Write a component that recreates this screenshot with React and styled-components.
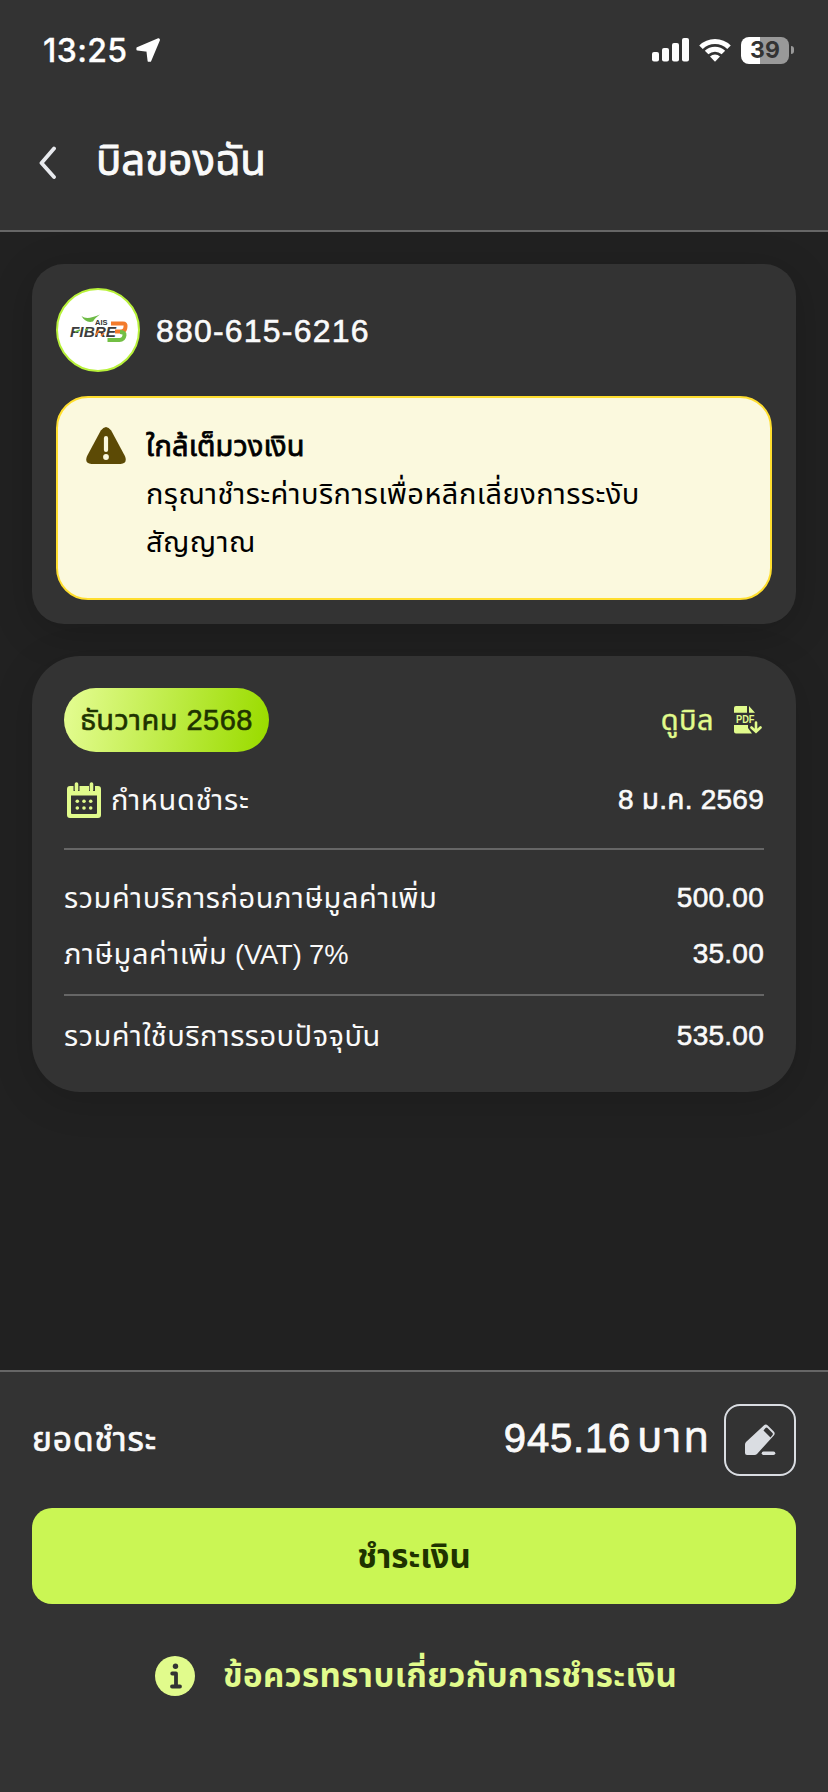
import React from "react";
import styled, { createGlobalStyle } from "styled-components";

const GlobalStyle = createGlobalStyle`
  * {
    box-sizing: border-box;
  }
  body {
    margin: 0;
    background: #212121;
    font-family: "Liberation Sans", "Noto Sans Thai", "Noto Sans", sans-serif;
    color: #fafafa;
  }
`;

const charges = [
  { label: "รวมค่าบริการก่อนภาษีมูลค่าเพิ่ม", amount: "500.00" },
  { label: "ภาษีมูลค่าเพิ่ม", note: " (VAT) 7%", amount: "35.00" },
];

const LocationIcon = () => (
  <svg width="26" height="26" viewBox="0 0 26 26">
    <path
      d="M23.5 2.2 2.4 11.2v1.4l10 1.2 1.2 10h1.6L24 2.8z"
      fill="#fff"
      stroke="#fff"
      strokeWidth="2"
      strokeLinejoin="round"
    />
  </svg>
);

const SignalIcon = () => (
  <svg width="37" height="24" viewBox="0 0 37 24">
    <rect x="0" y="14" width="7" height="9.5" rx="2" fill="#fff" />
    <rect x="10" y="10" width="7" height="13.5" rx="2" fill="#fff" />
    <rect x="20" y="5" width="7" height="18.5" rx="2" fill="#fff" />
    <rect x="30" y="0" width="7" height="23.5" rx="2" fill="#fff" />
  </svg>
);

const WifiIcon = () => (
  <svg width="32" height="24" viewBox="0 0 32 24">
    <g fill="none" stroke="#fff" strokeWidth="5">
      <path d="M2 9.2a19.8 19.8 0 0 1 28 0" />
      <path d="M7.6 14.6a11.9 11.9 0 0 1 16.8 0" />
    </g>
    <path d="M16 23.8l-5-5.2a7.2 7.2 0 0 1 10 0z" fill="#fff" />
  </svg>
);

const BackIcon = () => (
  <svg width="18" height="34" viewBox="0 0 18 34">
    <path
      d="M15 2.5 2.5 17 15 31"
      fill="none"
      stroke="#e8eaee"
      strokeWidth="3.8"
      strokeLinecap="round"
      strokeLinejoin="round"
    />
  </svg>
);

const FibreLogo = () => (
  <svg width="80" height="80" viewBox="0 0 80 80">
    <path d="M23.500 26c4 3 9 2.500 18.500-1.500-4 3-5 4-7 7-5 1.500-9-1-11.500-5.500z" fill="#6dbb45" />
    <text
      x="37"
      y="35.400"
      fontFamily="Liberation Sans"
      fontWeight="700"
      fontSize="7.500"
      fill="#333"
      textLength="12.500"
      lengthAdjust="spacingAndGlyphs"
    >
      AIS
    </text>
    <text
      x="12"
      y="47.200"
      fontFamily="Liberation Sans"
      fontWeight="700"
      fontStyle="italic"
      fontSize="14.500"
      fill="#3c3c3c"
      textLength="46"
      lengthAdjust="spacingAndGlyphs"
    >
      FIBRE
    </text>
    <path d="M53 33.500h12q3 0 2.500 3l-.3 2q-.7 3-4 3H57" fill="none" stroke="#f37b2c" strokeWidth="4" />
    <path d="M62 42q5 0 4.500 3.300-.7 4.700-5 4.700H49.500" fill="none" stroke="#72bf44" strokeWidth="4" />
    <path d="M17 42l5-2M27 40l3-1" stroke="#6dbb45" strokeWidth="1.500" />
    <path d="M38 45l3-5M43 46l3-3" stroke="#f37b2c" strokeWidth="1.500" />
  </svg>
);

const WarningIcon = () => (
  <svg width="42" height="38" viewBox="0 0 42 38">
    <path
      d="M15.800 3.600q5.200-7 10.400 0L39.900 29q3 7.400-4.400 8H6.500q-7.400-.6-4.400-8z"
      fill="#5c4a05"
    />
    <path d="M21 11v12" stroke="#fbf9de" strokeWidth="4.200" strokeLinecap="round" />
    <circle cx="21" cy="30" r="2.900" fill="#fbf9de" />
  </svg>
);

const PdfIcon = () => (
  <svg width="28" height="29" viewBox="0 0 28 29">
    <path d="M0 8V2q0-2 2-2h11v6.800H0zM15 0l6 6.800h-6z" fill="#e1fb8c" />
    <path d="M0 19h14v3l4 5.600H2q-2 0-2-2z" fill="#e1fb8c" />
    <text
      x="2"
      y="16.800"
      fontFamily="Liberation Sans"
      fontWeight="700"
      fontSize="10"
      fill="#e1fb8c"
      textLength="18.500"
      lengthAdjust="spacingAndGlyphs"
    >
      PDF
    </text>
    <path
      d="M22 16.500v9M17.500 21.500l4.500 4.300 4.500-4.300"
      fill="none"
      stroke="#e1fb8c"
      strokeWidth="2.600"
      strokeLinecap="round"
    />
  </svg>
);

const CalendarIcon = () => (
  <svg width="34" height="36" viewBox="0 0 34 36">
    <path
      fillRule="evenodd"
      d="M3 4h28q3 0 3 3v26q0 3-3 3H3q-3 0-3-3V7q0-3 3-3zM4 13.500V31q0 1 1 1h24q1 0 1-1V13.500z"
      fill="#e1fb8c"
    />
    <path d="M9.500 0v9M25 0v9" stroke="#333" strokeWidth="6" />
    <path d="M9.500 2v6M24.500 2v6" stroke="#e1fb8c" strokeWidth="3.600" strokeLinecap="round" />
    <g fill="#e1fb8c">
      {[10.3, 17, 23.7].map((x) => (
        <React.Fragment key={x}>
          <circle cx={x} cy="19.200" r="1.800" />
          <circle cx={x} cy="26" r="1.800" />
        </React.Fragment>
      ))}
    </g>
  </svg>
);

const EditIcon = () => (
  <svg width="32" height="32" viewBox="0 0 32 32">
    <path
      fillRule="evenodd"
      d="M1 29V20.500q0-1.500 1-2.500L19.800 1.400q2-1.800 4 0l6 6.200q1.800 2 0 4L13 30q-1 1-2.500 1H3q-2 0-2-2zM19.500 6.500l7 7 2-2.500q.8-1 0-2l-5-5q-1-.8-2 0z"
      fill="#dadde2"
    />
    <path d="M19.500 29.300h10" stroke="#dadde2" strokeWidth="3.600" strokeLinecap="round" />
  </svg>
);

const InfoIcon = () => (
  <svg width="40" height="40" viewBox="0 0 40 40">
    <circle cx="20" cy="20" r="20" fill="#e1fb8c" />
    <circle cx="20.500" cy="10.200" r="2.700" fill="#333" />
    <path
      d="M17.200 17.500H21V30.500M17 30.500h8"
      fill="none"
      stroke="#333"
      strokeWidth="3.800"
      strokeLinecap="round"
      strokeLinejoin="round"
    />
  </svg>
);

const App = () => {
  return (
    <Page>
      <GlobalStyle />
      <Header>
        <StatusBar>
          <Clock>13:25</Clock>
          <LocationIcon />
          <StatusIcons>
            <SignalIcon />
            <WifiIcon />
            <BatteryWrap>
              <Battery>39</Battery>
              <BatteryTip />
            </BatteryWrap>
          </StatusIcons>
        </StatusBar>
        <TitleBar>
          <BackIcon />
          <Title>บิลของฉัน</Title>
        </TitleBar>
      </Header>

      <Main>
        <AccountCard>
          <AccountRow>
            <Avatar>
              <FibreLogo />
            </Avatar>
            <PhoneNumber>880-615-6216</PhoneNumber>
          </AccountRow>
          <Alert>
            <WarningIcon />
            <AlertText>
              <Label $size={29} $spacing={0.1} $stroke={0.8}>ใกล้เต็มวงเงิน</Label>
              <Label $size={29} $spacing={0.45}>กรุณาชำระค่าบริการเพื่อหลีกเลี่ยงการระงับ</Label>
              <Label $size={29} $spacing={0.45}>สัญญาณ</Label>
            </AlertText>
          </Alert>
        </AccountCard>

        <BillCard>
          <BillHead>
            <MonthPill>
              <Label $size={29} $spacing={0.45} $stroke={0.6}>ธันวาคม 2568</Label>
            </MonthPill>
            <BillLink>
              <Label $size={29} $spacing={0.4} $stroke={0.4}>ดูบิล</Label>
              <PdfIcon />
            </BillLink>
          </BillHead>
          <DueRow>
            <DueLabel>
              <CalendarIcon />
              <Label $size={29} $spacing={0.7}>กำหนดชำระ</Label>
            </DueLabel>
            <Label $spacing={0.25} $stroke={0.6}>8 ม.ค. 2569</Label>
          </DueRow>
          <ChargeList>
            {charges.map((charge) => (
              <ChargeRow key={charge.label}>
                <Label $size={29} $spacing={0.57}>
                  {charge.label}
                  {charge.note && <Note>{charge.note}</Note>}
                </Label>
                <Label $spacing={0.25} $stroke={0.6}>{charge.amount}</Label>
              </ChargeRow>
            ))}
          </ChargeList>
          <TotalRow>
            <Label $size={29} $spacing={0.5}>รวมค่าใช้บริการรอบปัจจุบัน</Label>
            <Label $spacing={0.25} $stroke={0.6}>535.00</Label>
          </TotalRow>
        </BillCard>
      </Main>

      <Footer>
        <AmountRow>
          <Label $size={33.5} $spacing={0.9} $stroke={0.7}>ยอดชำระ</Label>
          <Amount>
            <Label $size={40} $spacing={0.8} $stroke={0.8}>945.16</Label>
            <Label $size={42} $spacing={2} $stroke={0.6}>บาท</Label>
          </Amount>
          <EditButton>
            <EditIcon />
          </EditButton>
        </AmountRow>
        <PayButton>ชำระเงิน</PayButton>
        <InfoLink>
          <InfoIcon />
          <Label $size={33} $weight={700} $spacing={0.4}>ข้อควรทราบเกี่ยวกับการชำระเงิน</Label>
        </InfoLink>
      </Footer>
    </Page>
  );
};

export default App;

const Page = styled.div`
  display: flex;
  flex-direction: column;
  width: 828px;
  height: 1792px;
  overflow: hidden;
  background: #212121;
`;

const Header = styled.header`
  height: 232px;
  background: #333;
  border-bottom: 2px solid #666;
`;

const StatusBar = styled.div`
  display: flex;
  align-items: center;
  height: 100px;
  padding: 0 34px 0 43px;
`;

const Clock = styled.span`
  width: 92px;
  font-family: Inter, sans-serif;
  font-size: 32px;
  font-weight: 500;
  letter-spacing: 0.4px;
  color: #fff;
  -webkit-text-stroke: 0.3px currentColor;
`;

const StatusIcons = styled.div`
  display: flex;
  align-items: center;
  gap: 10px;
  margin-left: auto;
`;

const BatteryWrap = styled.div`
  display: flex;
  align-items: center;
  gap: 2px;
`;

const Battery = styled.div`
  width: 48px;
  height: 27px;
  border-radius: 8px;
  background: linear-gradient(90deg, #fff 40%, #999 40%);
  color: #333;
  font-family: Inter, sans-serif;
  font-size: 23px;
  font-weight: 700;
  line-height: 27px;
  text-align: center;
`;

const BatteryTip = styled.div`
  width: 3px;
  height: 8px;
  border-radius: 0 4px 4px 0;
  background: #999;
`;

const TitleBar = styled.div`
  display: flex;
  align-items: center;
  gap: 39px;
  height: 126px;
  padding-left: 39px;
`;

const Title = styled.h1`
  margin: 0 0 5px;
  font-size: 42px;
  font-weight: 400;
  line-height: 60px;
  -webkit-text-stroke: 0.9px currentColor;
`;

const Main = styled.main`
  display: flex;
  flex-direction: column;
  gap: 32px;
  flex: 1;
  padding: 32px;
`;

const AccountCard = styled.section`
  height: 360px;
  padding: 24px;
  border-radius: 32px;
  background: #333;
  box-shadow: 0 8px 40px rgba(0, 0, 0, 0.2);
`;

const AccountRow = styled.div`
  display: flex;
  align-items: center;
  gap: 16px;
  height: 84px;
  margin-bottom: 24px;
`;

const Avatar = styled.div`
  display: flex;
  width: 84px;
  height: 84px;
  border: 2px solid #b8f13a;
  border-radius: 50%;
  background: #fff;
`;

const Label = styled.span`
  font-size: ${({ $size }) => $size || 28}px;
  font-weight: ${({ $weight }) => $weight || 400};
  letter-spacing: ${({ $spacing }) => $spacing || 0}px;
  line-height: 48px;
  white-space: nowrap;
  -webkit-text-stroke: ${({ $stroke }) => $stroke || 0}px currentColor;
`;

const PhoneNumber = styled.span`
  padding-top: 2px;
  font-size: 32px;
  letter-spacing: 1.2px;
  -webkit-text-stroke: 0.6px currentColor;
`;

const Note = styled.span`
  font-size: 27.3px;
  letter-spacing: -0.1px;
  white-space: pre;
`;

const Alert = styled.div`
  display: flex;
  gap: 19px;
  height: 204px;
  padding: 29px 28px 28px 27px;
  border: 2px solid #ffde2e;
  border-radius: 32px;
  background: #fbf9de;
  color: #000;
`;

const AlertText = styled.div`
  display: flex;
  flex-direction: column;
  margin-top: -5px;
`;

const BillCard = styled.section`
  height: 436px;
  padding: 32px;
  border-radius: 48px;
  background: #333;
  box-shadow: 0 8px 40px rgba(0, 0, 0, 0.15);
`;

const BillHead = styled.div`
  display: flex;
  align-items: center;
  justify-content: space-between;
  height: 64px;
`;

const MonthPill = styled.div`
  display: flex;
  align-items: center;
  justify-content: center;
  width: 205px;
  height: 64px;
  border-radius: 32px;
  background: linear-gradient(100deg, #e1fb8c 5%, #9bdc00 97%);
  color: #1f3300;
`;

const BillLink = styled.div`
  display: flex;
  align-items: center;
  gap: 20px;
  padding-right: 2px;
  color: #e1fb8c;
`;

const DueRow = styled.div`
  display: flex;
  align-items: center;
  justify-content: space-between;
  height: 98px;
  border-bottom: 2px solid #666;
`;

const DueLabel = styled.div`
  display: flex;
  align-items: center;
  gap: 10px;
  padding-left: 3px;
`;

const ChargeList = styled.div`
  height: 146px;
  padding-top: 20px;
  border-bottom: 2px solid #666;
`;

const ChargeRow = styled.div`
  display: flex;
  align-items: center;
  justify-content: space-between;
  height: 56px;
`;

const TotalRow = styled(ChargeRow)`
  height: 80px;
`;

const Footer = styled.footer`
  height: 422px;
  padding: 32px;
  border-top: 2px solid #666;
  background: #333;
`;

const AmountRow = styled.div`
  display: flex;
  align-items: center;
  height: 72px;
`;

const Amount = styled.div`
  display: flex;
  align-items: baseline;
  gap: 6px;
  margin: 0 0 4px auto;
`;

const EditButton = styled.button`
  display: flex;
  align-items: center;
  justify-content: center;
  width: 72px;
  height: 72px;
  margin-left: 13px;
  padding: 0;
  border: 2px solid #dadde2;
  border-radius: 16px;
  background: transparent;
`;

const PayButton = styled.button`
  width: 100%;
  height: 96px;
  margin-top: 32px;
  padding: 3px 0 0;
  border: 0;
  border-radius: 20px;
  background: #caf654;
  color: #1f3300;
  font-family: inherit;
  font-size: 33px;
  font-weight: 700;
`;

const InfoLink = styled.div`
  display: flex;
  align-items: center;
  gap: 28px;
  height: 96px;
  margin: 24px 0 0 123px;
  color: #e1fb8c;
`;
